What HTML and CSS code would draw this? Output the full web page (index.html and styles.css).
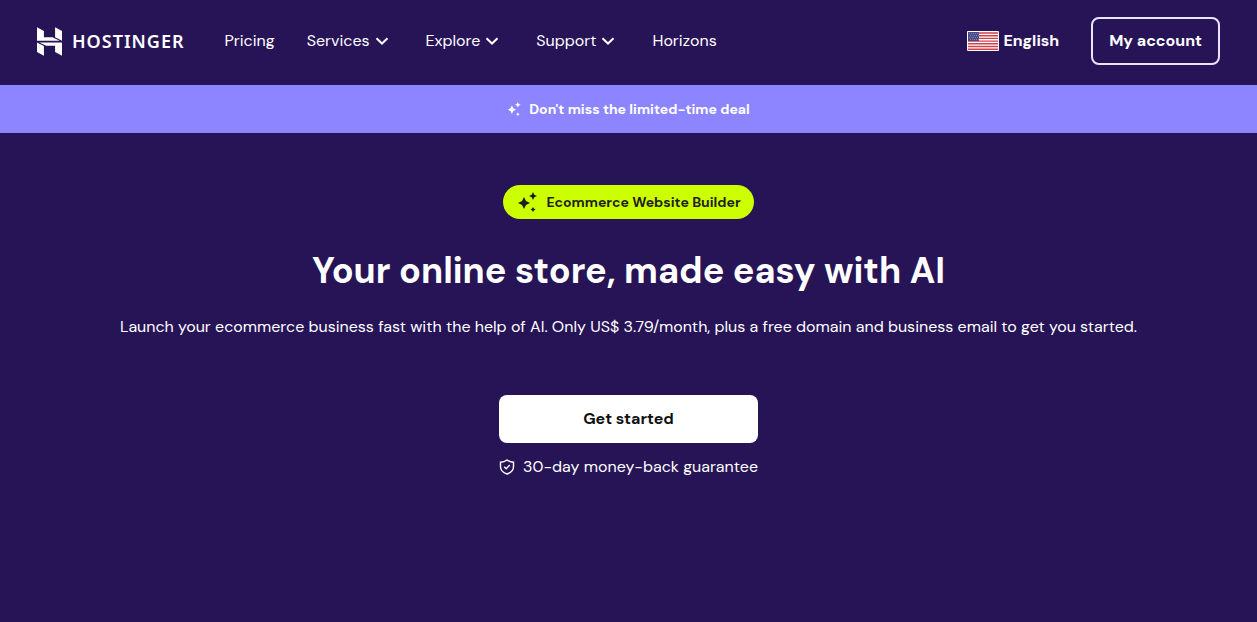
FILE: index.html
```
<!DOCTYPE html>
<html lang="en">
<head>
  <meta charset="UTF-8">
  <meta name="viewport" content="width=device-width, initial-scale=1">
  <title>Ecommerce Website Builder</title>
  <link rel="stylesheet" href="styles.css">
</head>
<body>

  <!-- Header -->
  <header class="header">
    <a class="logo" href="#">
      <svg class="logo-mark" viewBox="0 0 76 86" fill="currentColor" aria-hidden="true">
        <path d="M0 0L21 11V30H47L69 41H0Z"/>
        <path d="M55 0L76 11V41L55 30Z"/>
        <path d="M76 86L55 75V56H28L7 46H76Z"/>
        <path d="M0 46L21 57V86L0 75Z"/>
      </svg>
      <span class="logo-text">HOSTINGER</span>
    </a>

    <nav class="nav">
      <a href="#">Pricing</a>
      <button type="button">Services
        <svg class="chevron" viewBox="0 0 14 8"><path d="M1.5 1.2L7 6.5L12.5 1.2"/></svg>
      </button>
      <button type="button">Explore
        <svg class="chevron" viewBox="0 0 14 8"><path d="M1.5 1.2L7 6.5L12.5 1.2"/></svg>
      </button>
      <button type="button">Support
        <svg class="chevron" viewBox="0 0 14 8"><path d="M1.5 1.2L7 6.5L12.5 1.2"/></svg>
      </button>
      <a href="#">Horizons</a>
    </nav>

    <div class="actions">
      <button type="button" class="language">
        <svg class="flag" viewBox="0 0 32 20" aria-hidden="true">
          <rect width="32" height="20" rx="1" fill="#fff"/>
          <path d="M1 2H31M1 4.7H31M1 7.4H31M1 10.1H31M1 12.8H31M1 15.5H31M1 18.2H31" stroke="#d0404a" stroke-width="1.4"/>
          <rect x="1" y="1" width="11" height="9" fill="#464a86"/>
          <path d="M2 2.5H12M3 4.5H12M2 6.5H12M3 8.5H12" stroke="#a3a6cc" stroke-width="0.8" stroke-dasharray="0.8 1.2"/>
        </svg>
        English
      </button>
      <a class="account" href="#">My account</a>
    </div>
  </header>

  <!-- Deal banner -->
  <a class="banner" href="#">
    <svg class="banner-icon" viewBox="0 0 20 20" fill="currentColor" aria-hidden="true">
      <path d="M7 5L9 9L13 11L9 13L7 17L5 13L1 11L5 9Z"/>
      <path d="M15.5 0L16.8 2.7L19.5 4L16.8 5.3L15.5 8L14.2 5.3L11.5 4L14.2 2.7Z"/>
      <path d="M15.5 15L16.4 16.6L18 17.5L16.4 18.4L15.5 20L14.6 18.4L13 17.5L14.6 16.6Z"/>
    </svg>
    Don't miss the limited-time deal
  </a>

  <!-- Hero -->
  <main class="hero">
    <div class="tag">
      <svg class="tag-icon" viewBox="0 0 20 20" fill="currentColor" aria-hidden="true">
        <path d="M6 5L8 9L12 11L8 13L6 17L4 13L0 11L4 9Z"/>
        <path d="M15 0L16.3 2.7L19 4L16.3 5.3L15 8L13.700 5.3L11 4L13.700 2.7Z"/>
        <path d="M15 15L15.9 16.6L17.5 17.5L15.9 18.4L15 20L14.1 18.4L12.5 17.5L14.1 16.6Z"/>
      </svg>
      Ecommerce Website Builder
    </div>
    <h1>Your online store, made easy with AI</h1>
    <p class="lead">Launch your ecommerce business fast with the help of AI. Only US$ 3.79/month, plus a free domain and business email to get you started.</p>
    <div class="cta">
      <a class="start" href="#">Get started</a>
      <p class="guarantee">
        <svg class="shield" viewBox="0 0 16 16" aria-hidden="true">
          <path d="M8 1C6.2 2.4 3.8 3.1 1.5 3.2V7.5C1.5 11 4 13.7 8 15C12 13.7 14.5 11 14.5 7.5V3.2C12.2 3.1 9.8 2.4 8 1Z"/>
          <path d="M5.2 7.8L7.2 9.7L10.8 6"/>
        </svg>
        30-day money-back guarantee
      </p>
    </div>
  </main>

</body>
</html>
```
FILE: styles.css
```
* {
  box-sizing: border-box;
}

body {
  margin: 0;
  min-height: 100vh;
  background-color: #271457;
  color: #fff;
  font-family: "DM Sans", Inter, "Liberation Sans", sans-serif;
  font-size: 16px;
  line-height: 24px;
}

a {
  color: inherit;
  text-decoration: none;
}

button {
  padding: 0;
  border: none;
  background: none;
  color: inherit;
  font: inherit;
  cursor: pointer;
}

svg {
  flex-shrink: 0;
}

/* header */
.header {
  display: flex;
  align-items: center;
  padding: 17px 37px 20px;
}

.logo {
  display: flex;
  align-items: center;
  gap: 10px;
  margin-right: 40px;
}

.logo-mark {
  width: 25px;
  height: 29px;
}

.logo-text {
  font-family: "Noto Sans", sans-serif;
  font-size: 18px;
  font-weight: 600;
  letter-spacing: 1px;
}

.nav {
  display: flex;
  align-items: center;
  gap: 32px;
}

.nav button {
  display: flex;
  align-items: center;
  gap: 5px;
  padding-right: 5px;
}

.chevron {
  width: 14px;
  height: 8px;
  fill: none;
  stroke: currentColor;
  stroke-width: 2;
}

.actions {
  display: flex;
  align-items: center;
  gap: 32px;
  margin-left: auto;
  font-weight: 700;
}

.language {
  display: flex;
  align-items: center;
  gap: 4px;
}

.flag {
  width: 32px;
  height: 20px;
}

.account {
  padding: 10px 16px;
  border: 2px solid #ebe4ff;
  border-radius: 8px;
}

/* banner */
.banner {
  display: flex;
  align-items: center;
  justify-content: center;
  gap: 8px;
  padding: 12px 16px;
  background-color: #8c85ff;
  font-size: 14px;
  font-weight: 700;
}

.banner-icon {
  width: 14px;
  height: 14px;
}

/* hero */
.hero {
  display: flex;
  flex-direction: column;
  align-items: center;
  padding: 52px 16px;
  text-align: center;
}

.tag {
  display: flex;
  align-items: center;
  gap: 8px;
  padding: 5px 13px 5px 15px;
  border-radius: 17px;
  background-color: #cf0;
  color: #1f1f1f;
  font-size: 14px;
  font-weight: 700;
}

.tag-icon {
  width: 20px;
  height: 20px;
}

h1 {
  margin: 28px 0 20px;
  font-size: 36px;
  font-weight: 700;
  line-height: 48px;
}

.lead {
  margin: 0 0 56px;
}

.cta {
  display: flex;
  flex-direction: column;
  gap: 12px;
}

.start {
  padding: 12px 16px;
  border-radius: 8px;
  background-color: #fff;
  color: #111;
  font-weight: 700;
}

.guarantee {
  display: flex;
  align-items: center;
  justify-content: center;
  gap: 8px;
  margin: 0;
}

.shield {
  width: 16px;
  height: 16px;
  fill: none;
  stroke: currentColor;
  stroke-width: 1.4;
}
```
